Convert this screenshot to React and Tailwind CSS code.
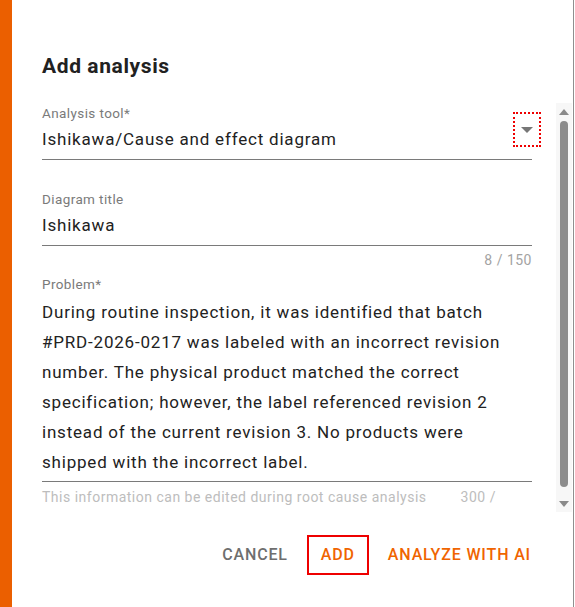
import React from 'react';

const problemText =
  'During routine inspection, it was identified that batch #PRD-2026-0217 was labeled with an incorrect revision number. The physical product matched the correct specification; however, the label referenced revision 2 instead of the current revision 3. No products were shipped with the incorrect label.';

const Scrollbar = () => (
  <div className="w-[16px] h-[409px] bg-[#f7f7f7] flex flex-col items-center">
    <svg width="10" height="6" viewBox="0 0 10 6" className="mt-[6px]">
      <path d="M0 6 L5 0 L10 6 Z" fill="#8a8a8a" />
    </svg>
    <div className="mt-[6px] w-[8px] h-[366px] rounded-full bg-[#8c8c8c]" />
    <svg width="10" height="6" viewBox="0 0 10 6" className="mt-[14px]">
      <path d="M0 0 L5 6 L10 0 Z" fill="#8a8a8a" />
    </svg>
  </div>
);

export default function App() {
  return (
    <div className="w-[575px] h-[607px] flex bg-white font-['Roboto',sans-serif] overflow-hidden">
      <div className="w-[12px] shrink-0 bg-[#eb5f00]" />
      <div className="w-[562px] shrink-0 border-r border-[#8f8f8f] flex flex-col">
        <h2 className="pt-[50px] pl-[30px] text-[21px] leading-[32px] tracking-[0.6px] font-bold text-[#212121]">
          Add analysis
        </h2>

        <div className="mt-[21px] flex pl-[30px]">
          <div className="w-[490px]">
            {/* Analysis tool */}
            <div className="relative">
              <div className="text-[13.5px] leading-[20px] tracking-[0.4px] text-[#7a7a7a]">Analysis tool*</div>
              <div className="mt-[4px] pb-[8px] border-b border-[#7a7a7a] text-[17px] leading-[24px] tracking-[0.8px] text-[#222]">
                Ishikawa/Cause and effect diagram
              </div>
              <div className="absolute right-[-9px] top-[9px] w-[28px] h-[35px] border-2 border-dotted border-[#ee0000] flex items-center justify-center">
                <svg width="12" height="6" viewBox="0 0 12 6">
                  <path d="M0 0 L6 6 L12 0 Z" fill="#777" />
                </svg>
              </div>
            </div>

            {/* Diagram title */}
            <div className="mt-[29px]">
              <div className="text-[13.5px] leading-[20px] tracking-[0.4px] text-[#7a7a7a]">Diagram title</div>
              <div className="mt-[4px] pb-[8px] border-b border-[#7a7a7a] text-[17px] leading-[24px] tracking-[0.8px] text-[#222]">
                Ishikawa
              </div>
              <div className="mt-[6px] text-right text-[14px] leading-[16px] tracking-[0.5px] text-[#a3a3a3]">8 / 150</div>
            </div>

            {/* Problem */}
            <div className="mt-[6px]">
              <div className="text-[13.5px] leading-[20px] tracking-[0.4px] text-[#7a7a7a]">Problem*</div>
              <div className="mt-[3px] pb-[4px] pr-[25px] border-b border-[#7a7a7a] text-[17px] leading-[30px] tracking-[0.8px] text-[#222]">
                {problemText}
              </div>
              <div className="mt-[7px] flex text-[14px] leading-[16px] tracking-[0.5px] text-[#bdbdbd]">
                <span>This information can be edited during root cause analysis</span>
                <span className="ml-[34px]">300 /</span>
              </div>
            </div>
          </div>
          <div className="ml-[24px]">
            <Scrollbar />
          </div>
        </div>

        <div className="mt-[23px] flex items-center justify-end pr-[34px] text-[16px] leading-[20px] tracking-[0.85px] font-medium">
          <button className="px-[8px] py-[10px] uppercase text-[#6e6e6e]">Cancel</button>
          <button className="ml-[11px] w-[62px] h-[40px] border-2 border-[#ee0000] uppercase text-[#f06400]">Add</button>
          <button className="ml-[11px] px-[8px] py-[10px] uppercase text-[#f06400]">Analyze with AI</button>
        </div>
      </div>
    </div>
  );
}
